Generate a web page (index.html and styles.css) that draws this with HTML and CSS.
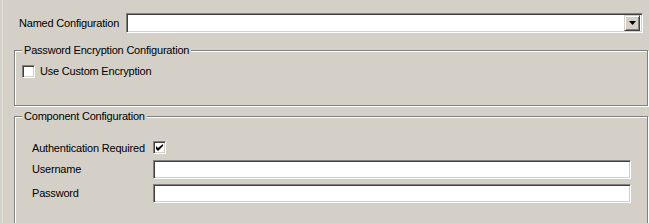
FILE: index.html
```html
<!DOCTYPE html>
<html lang="en">
<head>
  <meta charset="UTF-8">
  <title>Security Settings</title>
  <link rel="stylesheet" href="styles.css">
</head>
<body>
  <div class="page">
    <div class="named-row">
      <label class="named-label">Named Configuration</label>
      <div class="combo">
        <span class="combo-text"></span>
        <span class="combo-button">
          <svg width="7" height="4" viewBox="0 0 7 4"><path d="M0 0h7L3.5 4z" fill="#000"/></svg>
        </span>
      </div>
    </div>

    <fieldset class="group group-encryption">
      <legend>Password Encryption Configuration</legend>
      <label class="check-row">
        <span class="checkbox"></span>
        <span>Use Custom Encryption</span>
      </label>
    </fieldset>

    <fieldset class="group group-component">
      <legend>Component Configuration</legend>
      <div class="form-grid">
        <span class="form-label">Authentication Required</span>
        <span class="checkbox checked">
          <svg width="7" height="7" viewBox="0 0 7 7"><path d="M0 2v3l2 2 5-5V0L2 4z" fill="#000"/></svg>
        </span>
        <span class="form-label">Username</span>
        <div class="text-field"></div>
        <span class="form-label">Password</span>
        <div class="text-field"></div>
      </div>
    </fieldset>
  </div>
</body>
</html>
```

FILE: styles.css
```css
html, body {
  margin: 0;
  height: 100%;
  overflow: hidden;
}

body {
  background-color: #d4d0c8;
  font-family: "Liberation Sans", Arial, sans-serif;
  font-size: 11px;
  line-height: 13px;
  letter-spacing: -0.2px;
  color: #000;
}

.page {
  box-sizing: border-box;
  display: flex;
  flex-direction: column;
  margin-left: 2px;
  border-left: 1px solid #e4e1db;
  padding: 13px 1px 0 11px;
  height: 100%;
}

/* top row */
.named-row {
  display: flex;
  align-items: center;
  margin: 0 5px 0 5px;
}

.named-label {
  width: 107px;
  flex: none;
}

.combo {
  flex: 1;
  height: 20px;
  box-sizing: border-box;
  display: flex;
  justify-content: flex-end;
  align-items: center;
  padding: 0 2px;
  background-color: #fff;
  border: 1px solid;
  border-color: #808080 #fff #fff #808080;
  box-shadow: inset 1px 1px 0 #404040, inset -1px -1px 0 #d4d0c8;
}

.combo-button {
  width: 16px;
  height: 16px;
  box-sizing: border-box;
  display: flex;
  align-items: center;
  justify-content: center;
  background-color: #d4d0c8;
  border: 1px solid;
  border-color: #d4d0c8 #404040 #404040 #d4d0c8;
  box-shadow: inset 1px 1px 0 #fff, inset -1px -1px 0 #808080;
}

/* etched group boxes */
.group {
  margin: 0;
  padding: 0;
  border: 1px solid #808080;
  box-shadow: inset 1px 1px 0 #fff, 1px 1px 0 #fff;
  min-width: 0;
}

.group legend {
  margin-left: 7px;
  padding: 0 2px;
  background-color: #d4d0c8;
}

.group-encryption {
  margin-top: 11px;
  padding-bottom: 27px;
}

/* runs on past the bottom of the window */
.group-component {
  flex: 1;
  margin-top: 4px;
  margin-bottom: -6px;
}

.check-row {
  display: flex;
  align-items: center;
  gap: 5px;
  margin: 8px 0 0 7px;
}

.checkbox {
  width: 13px;
  height: 13px;
  box-sizing: border-box;
  flex: none;
  display: flex;
  align-items: center;
  justify-content: center;
  background-color: #fff;
  border: 1px solid;
  border-color: #808080 #fff #fff #808080;
  box-shadow: inset 1px 1px 0 #404040, inset -1px -1px 0 #d4d0c8;
}

.form-grid {
  display: grid;
  grid-template-columns: 121px 478px;
  row-gap: 5px;
  align-items: center;
  margin: 18px 0 0 17px;
}

.form-grid .checkbox {
  margin-bottom: 1px;
}

.text-field {
  height: 19px;
  box-sizing: border-box;
  background-color: #fff;
  border: 1px solid;
  border-color: #808080 #fff #fff #808080;
  box-shadow: inset 1px 1px 0 #404040, inset -1px -1px 0 #d4d0c8;
}
```
